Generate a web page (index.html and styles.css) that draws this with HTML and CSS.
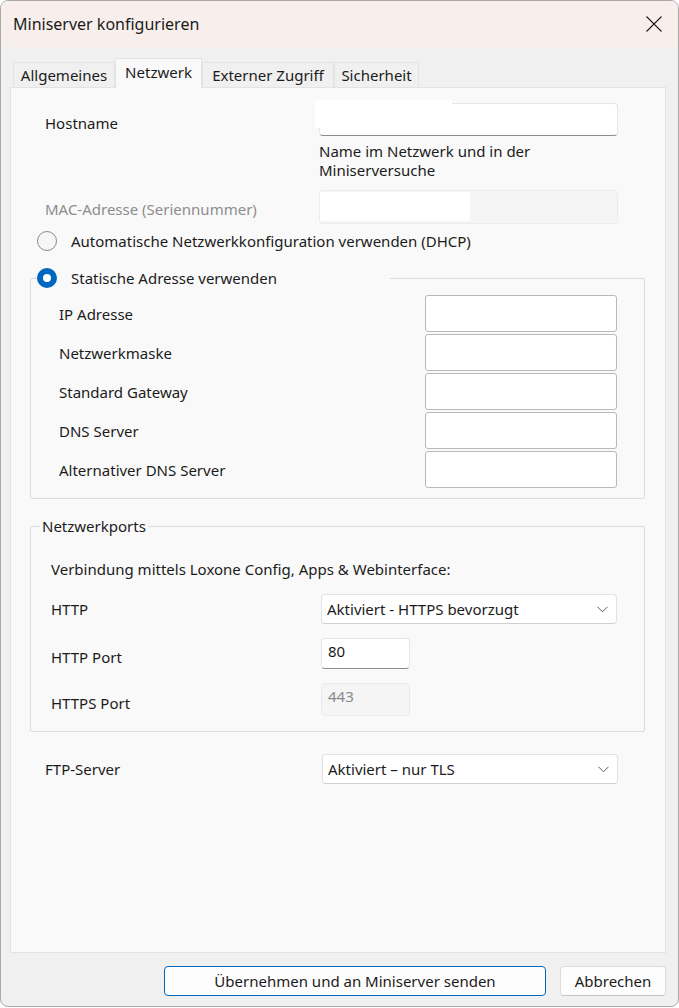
FILE: index.html
```html
<!DOCTYPE html>
<html lang="de">
<head>
  <meta charset="UTF-8">
  <meta name="viewport" content="width=device-width, initial-scale=1.0">
  <title>Miniserver konfigurieren</title>
  <link rel="stylesheet" href="styles.css">
</head>
<body>

  <div class="window">
    <div class="titlebar">
      <span class="title">Miniserver konfigurieren</span>
      <svg class="close" width="16" height="16" viewBox="0 0 16 16">
        <path d="M0.5 0.5 L15.5 15.5 M15.5 0.5 L0.5 15.5" stroke="#1b1b1b" stroke-width="1.1" fill="none"/>
      </svg>
    </div>

    <div class="tabs">
      <div class="tab tab-allg">Allgemeines</div>
      <div class="tab tab-netz active">Netzwerk</div>
      <div class="tab tab-ext">Externer Zugriff</div>
      <div class="tab tab-sich">Sicherheit</div>
    </div>

    <div class="panel">
      <div class="row row-host">
        <label class="lbl low">Hostname</label>
        <div class="field wide host">
          <span class="mask mask-host"></span>
        </div>
      </div>
      <div class="hint">Name im Netzwerk und in der<br>Miniserversuche</div>

      <div class="row row-mac">
        <label class="lbl disabled">MAC-Adresse (Seriennummer)</label>
        <div class="field wide readonly">
          <span class="mask mask-mac"></span>
        </div>
      </div>

      <div class="radio-row dhcp">
        <span class="radio"></span>
        <span>Automatische Netzwerkkonfiguration verwenden (DHCP)</span>
      </div>

      <fieldset class="group static">
        <legend class="radio-row legend-static">
          <span class="radio checked"></span>
          <span>Statische Adresse verwenden</span>
        </legend>
        <div class="row ip-row"><label class="lbl">IP Adresse</label><div class="field ip"></div></div>
        <div class="row ip-row"><label class="lbl">Netzwerkmaske</label><div class="field ip"></div></div>
        <div class="row ip-row"><label class="lbl">Standard Gateway</label><div class="field ip"></div></div>
        <div class="row ip-row"><label class="lbl">DNS Server</label><div class="field ip"></div></div>
        <div class="row ip-row last"><label class="lbl">Alternativer DNS Server</label><div class="field ip"></div></div>
      </fieldset>

      <fieldset class="group ports">
        <legend class="legend-ports">Netzwerkports</legend>
        <div class="intro">Verbindung mittels Loxone Config, Apps &amp; Webinterface:</div>
        <div class="row row-http">
          <label class="lbl">HTTP</label>
          <div class="select">
            <span>Aktiviert - HTTPS bevorzugt</span>
            <svg width="11" height="7" viewBox="0 0 11 7"><path d="M0.5 0.8 L5.5 5.8 L10.5 0.8" stroke="#5c5c5c" stroke-width="1" fill="none"/></svg>
          </div>
        </div>
        <div class="row row-port">
          <label class="lbl low">HTTP Port</label>
          <div class="port-wrap">
            <div class="field port">80</div>
          </div>
        </div>
        <div class="row row-sport">
          <label class="lbl low">HTTPS Port</label>
          <div class="port-wrap">
            <div class="field port readonly">443</div>
          </div>
        </div>
      </fieldset>

      <div class="row row-ftp">
        <label class="lbl">FTP-Server</label>
        <div class="select">
          <span>Aktiviert – nur TLS</span>
          <svg width="11" height="7" viewBox="0 0 11 7"><path d="M0.5 0.8 L5.5 5.8 L10.5 0.8" stroke="#5c5c5c" stroke-width="1" fill="none"/></svg>
        </div>
      </div>
    </div>

    <div class="buttons">
      <button class="btn primary">Übernehmen und an Miniserver senden</button>
      <button class="btn">Abbrechen</button>
    </div>
  </div>

</body>
</html>
```

FILE: styles.css
```css
* {
  box-sizing: border-box;
}

body {
  margin: 0;
  font-family: 'Noto Sans', 'Open Sans', sans-serif;
  font-size: 15px;
  color: #1b1b1b;
  background-color: #ffffff;
}

.window {
  width: 679px;
  height: 1007px;
  border: 1px solid #a9a9a9;
  border-radius: 8px;
  background-color: #f0f0f0;
  overflow: hidden;
}

.titlebar {
  height: 46px;
  background-color: #f8efec;
  display: flex;
  align-items: center;
  justify-content: space-between;
  padding: 0 16px 0 12px;
}

.title {
  font-size: 16px;
}

.tabs {
  height: 40px;
  display: flex;
  align-items: flex-end;
  margin-left: 12px;
}

.tab {
  height: 25px;
  display: flex;
  align-items: center;
  justify-content: center;
  border: 1px solid #e3e3e3;
  border-bottom: none;
  background-color: #f0f0f0;
}

.tab.active {
  height: 30px;
  background-color: #f9f9f9;
  margin-bottom: -1px;
  position: relative;
  z-index: 1;
  padding-bottom: 4px;
}

.tab-allg { width: 102px; }
.tab-netz { width: 87px; }
.tab-ext { width: 132px; }
.tab-sich { width: 85px; }

.panel {
  height: 866px;
  margin: 0 12px 0 9px;
  border: 1px solid #e3e3e3;
  background-color: #f9f9f9;
  padding: 15px 47px 0 34px;
}

.row {
  display: flex;
  align-items: center;
  justify-content: space-between;
}

.lbl.low {
  padding-top: 7px;
}

.lbl.disabled {
  color: #8d8d8d;
  padding-top: 3px;
}

.field {
  position: relative;
  background-color: #ffffff;
  border: 1px solid #e6e6e6;
  border-bottom-color: #8c8c8c;
  border-radius: 4px;
}

.field.readonly {
  background-color: #f5f5f5;
  border-color: #ececec;
  color: #8a8a8a;
}

.wide {
  width: 299px;
}

.host {
  height: 33px;
}

.row-mac {
  margin-top: 10px;
}

.row-mac .field {
  height: 34px;
}

.mask {
  position: absolute;
  background-color: #ffffff;
}

.mask-host {
  left: -5px;
  top: -4px;
  width: 137px;
  height: 28px;
}

.mask-mac {
  left: 0;
  top: 1px;
  width: 150px;
  height: 29px;
}

.hint {
  margin: 6px 0 0 274px;
  line-height: 19px;
}

.radio-row {
  display: flex;
  align-items: center;
  gap: 14px;
  height: 20px;
  line-height: 20px;
}

.dhcp {
  margin: 7px 0 0 -8px;
}

.radio {
  width: 20px;
  height: 20px;
  border-radius: 50%;
  border: 1px solid #8a8a8a;
  background-color: #f6f6f6;
}

.radio.checked {
  border: 6px solid #0067c0;
  background-color: #ffffff;
}

.group {
  margin: 0;
  border: 1px solid #dcdcdc;
  border-radius: 2px;
}

.static {
  width: 615px;
  margin: 17px 0 0 -15px;
  padding: 7px 27px 10px 28px;
}

.legend-static {
  width: 353px;
  margin-left: -22px;
  padding: 0;
}

.ip-row {
  height: 37px;
  margin-bottom: 2px;
}

.ip-row.last {
  margin-bottom: 0;
}

.field.ip {
  width: 192px;
  height: 37px;
  border: 1px solid #b9b9b9;
  border-radius: 3px;
}

.ports {
  width: 615px;
  margin: 17px 0 0 -15px;
  padding: 0 27px 15px 20px;
}

.legend-ports {
  margin-left: -11px;
  padding: 0 2px;
  line-height: 20px;
}

.intro {
  margin-top: 23px;
  line-height: 20px;
}

.select {
  width: 296px;
  height: 30px;
  display: flex;
  align-items: center;
  justify-content: space-between;
  padding: 0 8px 0 5px;
  background-color: #ffffff;
  border: 1px solid #e2e2e2;
  border-bottom-color: #cfcfcf;
  border-radius: 4px;
}

.row-http {
  margin-top: 15px;
}

.row-port,
.row-sport {
  margin-top: 14px;
}

.port-wrap {
  width: 296px;
}

.field.port {
  width: 89px;
  height: 31px;
  padding: 2px 0 0 6px;
}

.row-sport .field.port {
  height: 33px;
}

.row-ftp {
  margin-top: 22px;
}

.buttons {
  display: flex;
  justify-content: flex-end;
  gap: 14px;
  margin: 13px 12px 0 0;
}

.btn {
  height: 30px;
  font-family: inherit;
  font-size: 15px;
  color: #1b1b1b;
  background-color: #fdfdfd;
  border: 1px solid #dcdcdc;
  border-bottom-color: #c4c4c4;
  border-radius: 4px;
  padding: 0;
}

.btn.primary {
  width: 382px;
  border: 1px solid #0067c0;
  box-shadow: inset 0 0 0 1px #ffffff;
}

.btn:not(.primary) {
  width: 106px;
}
```
